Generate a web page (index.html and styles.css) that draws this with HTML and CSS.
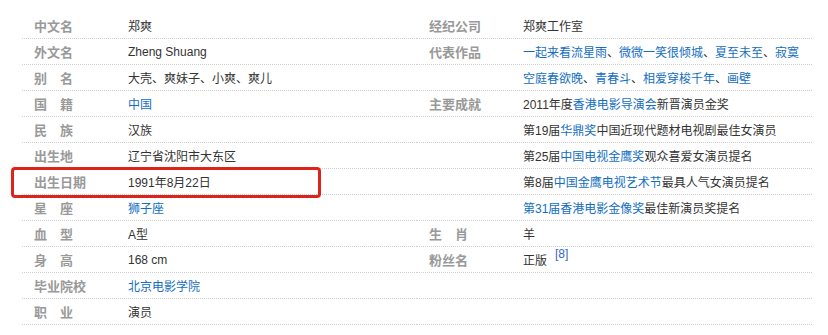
FILE: index.html
```html
<!DOCTYPE html>
<html lang="zh">
<head>
<meta charset="utf-8">
<link rel="stylesheet" href="styles.css">
</head>
<body>
<div class="basic-info">
  <dl class="col">
    <div class="row"><dt>中文名</dt><dd>郑爽</dd></div>
    <div class="row"><dt>外文名</dt><dd>Zheng Shuang</dd></div>
    <div class="row"><dt>别　名</dt><dd>大壳、爽妹子、小爽、爽儿</dd></div>
    <div class="row"><dt>国　籍</dt><dd><a>中国</a></dd></div>
    <div class="row"><dt>民　族</dt><dd>汉族</dd></div>
    <div class="row"><dt>出生地</dt><dd>辽宁省沈阳市大东区</dd></div>
    <div class="row"><dt>出生日期</dt><dd>1991年8月22日</dd></div>
    <div class="row"><dt>星　座</dt><dd><a>狮子座</a></dd></div>
    <div class="row"><dt>血　型</dt><dd>A型</dd></div>
    <div class="row"><dt>身　高</dt><dd>168 cm</dd></div>
    <div class="row"><dt>毕业院校</dt><dd><a>北京电影学院</a></dd></div>
    <div class="row"><dt>职　业</dt><dd>演员</dd></div>
  </dl>
  <dl class="col">
    <div class="row"><dt>经纪公司</dt><dd>郑爽工作室</dd></div>
    <div class="row"><dt>代表作品</dt><dd><a>一起来看流星雨</a>、<a>微微一笑很倾城</a>、<a>夏至未至</a>、<a>寂寞</a></dd></div>
    <div class="row"><dt></dt><dd><a>空庭春欲晚</a>、<a>青春斗</a>、<a>相爱穿梭千年</a>、<a>画壁</a></dd></div>
    <div class="row"><dt>主要成就</dt><dd>2011年度<a>香港电影导演会</a>新晋演员金奖</dd></div>
    <div class="row"><dt></dt><dd>第19届<a>华鼎奖</a>中国近现代题材电视剧最佳女演员</dd></div>
    <div class="row"><dt></dt><dd>第25届<a>中国电视金鹰奖</a>观众喜爱女演员提名</dd></div>
    <div class="row"><dt></dt><dd>第8届<a>中国金鹰电视艺术节</a>最具人气女演员提名</dd></div>
    <div class="row"><dt></dt><dd><a>第31届香港电影金像奖</a>最佳新演员奖提名</dd></div>
    <div class="row"><dt>生　肖</dt><dd>羊</dd></div>
    <div class="row"><dt>粉丝名</dt><dd>正版<sup class="ref">[8]</sup></dd></div>
    <div class="row"><dt></dt><dd></dd></div>
    <div class="row"><dt></dt><dd></dd></div>
  </dl>
  <div class="highlight"></div>
</div>
</body>
</html>
```

FILE: styles.css
```css
html, body {
  margin: 0;
  padding: 0;
  background: #fff;
}
body {
  font-family: "Liberation Sans", "Noto Sans CJK SC", sans-serif;
  font-size: 12px;
  color: #333;
}
.basic-info {
  position: relative;
  display: grid;
  grid-template-columns: 395px 395px;
  margin: 13px 0 0 22px;
}
.col {
  margin: 0;
}
.row {
  display: flex;
  align-items: center;
  height: 25px;
  border-bottom: 1px dotted #cfcfcf;
}
dt {
  width: 94px;
  padding-left: 12px;
  flex: none;
  font-size: 13px;
  font-weight: bold;
  color: #999;
}
dd {
  margin: 0;
  white-space: nowrap;
}
a {
  color: #136ec2;
  text-decoration: none;
}
.ref {
  position: relative;
  top: -3px;
  margin-left: 8px;
  font-size: 12px;
  color: #3366cc;
  vertical-align: top;
  line-height: 1;
}
.highlight {
  position: absolute;
  left: -11px;
  top: 154px;
  width: 304px;
  height: 25px;
  border: 3px solid #e0221c;
  border-radius: 4px;
}
```
